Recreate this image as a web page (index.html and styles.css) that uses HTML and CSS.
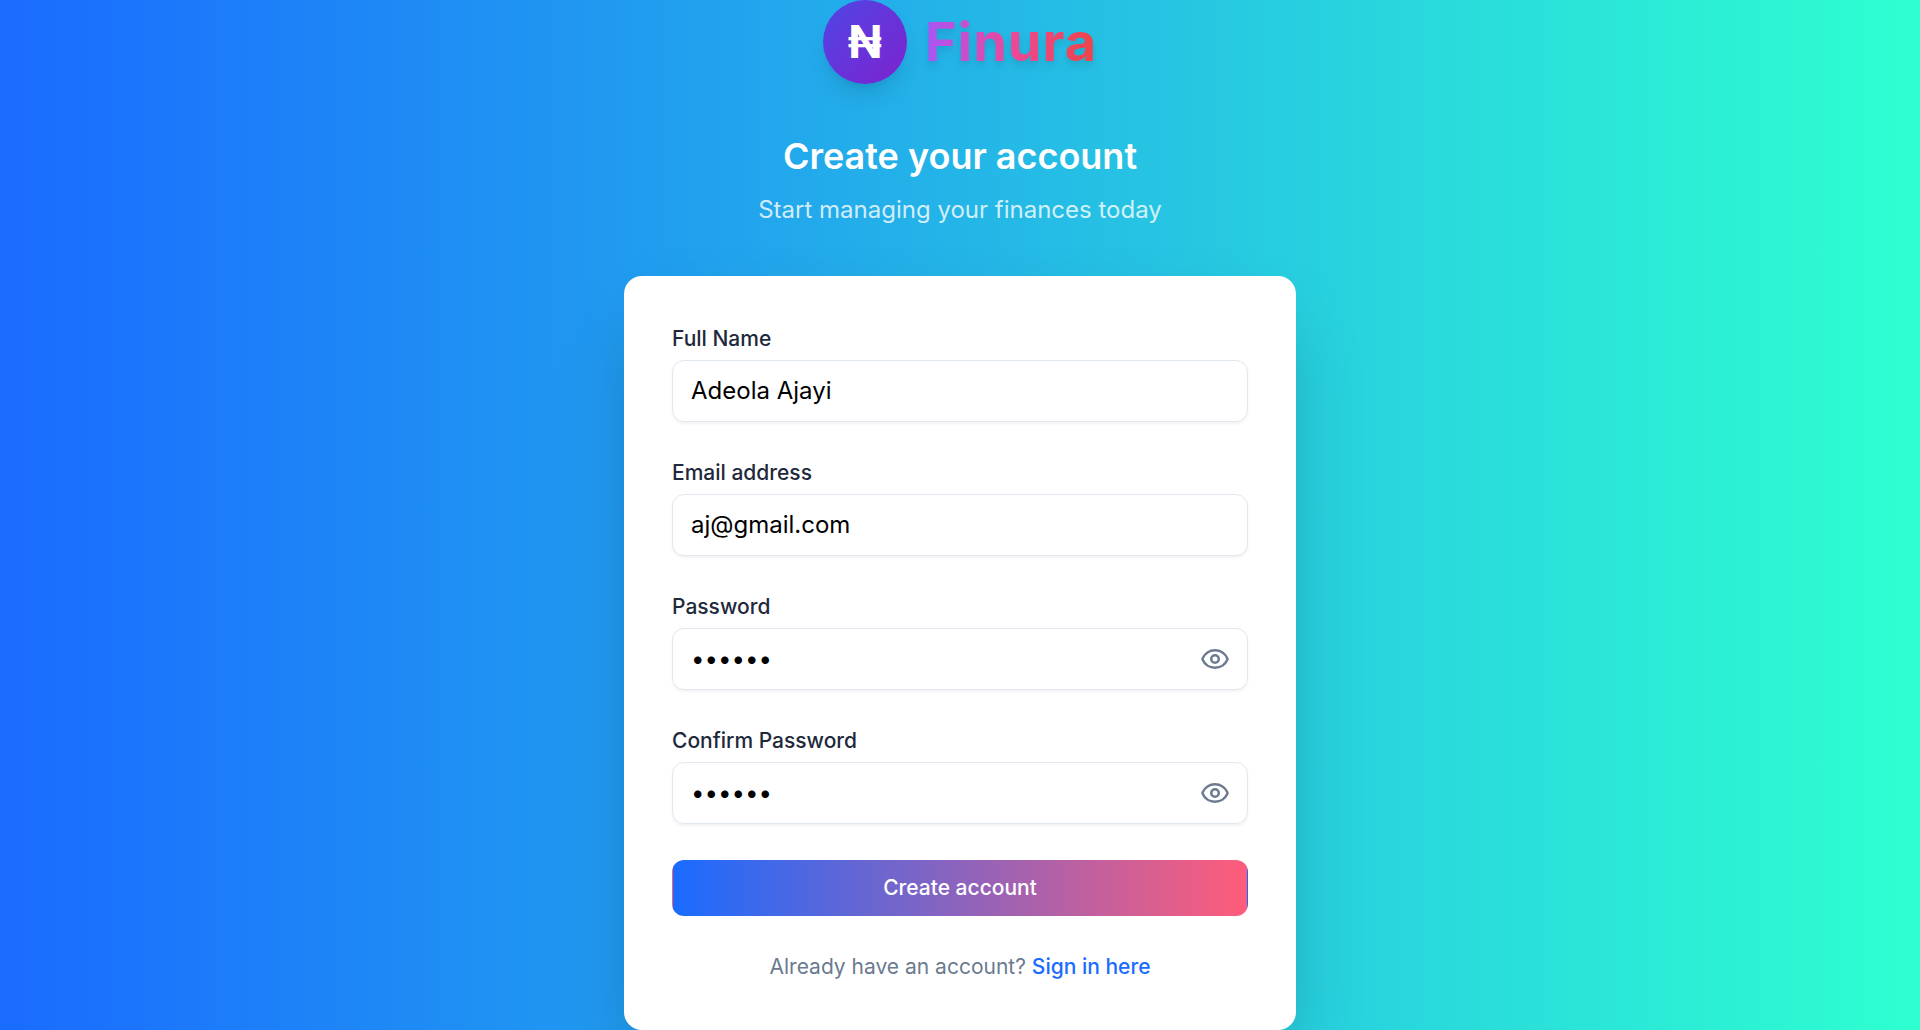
FILE: index.html
```html
<!DOCTYPE html>
<html lang="en">
<head>
<meta charset="utf-8">
<meta name="viewport" content="width=device-width, initial-scale=1">
<title>Finura – Create your account</title>
<link rel="stylesheet" href="styles.css">
</head>
<body>
<main class="page">
  <header class="intro">
    <div class="brand">
      <span class="brand-mark">₦</span>
      <span class="brand-name">Finura</span>
    </div>
    <h1 class="title">Create your account</h1>
    <p class="subtitle">Start managing your finances today</p>
  </header>
  <form class="card">
    <div class="field">
      <label class="label" for="name">Full Name</label>
      <input class="input" id="name" type="text" value="Adeola Ajayi">
    </div>
    <div class="field">
      <label class="label" for="email">Email address</label>
      <input class="input" id="email" type="email" value="aj@gmail.com">
    </div>
    <div class="field">
      <label class="label" for="password">Password</label>
      <div class="secret">
        <input class="input" id="password" type="password" value="secret">
        <button class="reveal" type="button" aria-label="Show password">
          <svg class="icon" viewBox="0 0 24 24" fill="none" stroke="currentColor" stroke-width="2" stroke-linecap="round" stroke-linejoin="round"><path d="M2.062 12.348a1 1 0 0 1 0-.696 10.75 10.75 0 0 1 19.876 0 1 1 0 0 1 0 .696 10.75 10.75 0 0 1-19.876 0"/><circle cx="12" cy="12" r="3"/></svg>
        </button>
      </div>
    </div>
    <div class="field">
      <label class="label" for="confirm">Confirm Password</label>
      <div class="secret">
        <input class="input" id="confirm" type="password" value="secret">
        <button class="reveal" type="button" aria-label="Show password confirmation">
          <svg class="icon" viewBox="0 0 24 24" fill="none" stroke="currentColor" stroke-width="2" stroke-linecap="round" stroke-linejoin="round"><path d="M2.062 12.348a1 1 0 0 1 0-.696 10.75 10.75 0 0 1 19.876 0 1 1 0 0 1 0 .696 10.75 10.75 0 0 1-19.876 0"/><circle cx="12" cy="12" r="3"/></svg>
        </button>
      </div>
    </div>
    <button class="submit" type="submit">Create account</button>
    <p class="switch">Already have an account? <a class="link" href="#">Sign in here</a></p>
  </form>
</main>
</body>
</html>
```
FILE: styles.css
```css
*,
*::before,
*::after {
  box-sizing: border-box;
}

body {
  margin: 0;
  font-family: Inter, "Liberation Sans", sans-serif;
}

.page {
  min-height: 100vh;
  display: flex;
  flex-direction: column;
  align-items: center;
  justify-content: center;
  gap: 48px;
  background: linear-gradient(to right, #1a6bff, #2effd0);
}

.intro {
  text-align: center;
}

.brand {
  display: flex;
  align-items: center;
  justify-content: center;
  gap: 18px;
  margin-bottom: 48px;
}

.brand-mark {
  display: flex;
  align-items: center;
  justify-content: center;
  width: 84px;
  height: 84px;
  border-radius: 50%;
  background: linear-gradient(to bottom right, #4f46e5, #7e22ce);
  box-shadow: 0 15px 22px -4px rgba(0, 0, 0, 0.1), 0 6px 9px -6px rgba(0, 0, 0, 0.1);
  color: #fff;
  font-size: 45px;
  line-height: 54px;
  font-weight: 700;
}

.brand-name {
  background: linear-gradient(to right, #a855f7, #ec4899, #ef4444);
  background-clip: text;
  color: transparent;
  filter: drop-shadow(0 6px 4px rgba(0, 0, 0, 0.07)) drop-shadow(0 3px 3px rgba(0, 0, 0, 0.06));
  font-size: 54px;
  line-height: 60px;
  font-weight: 700;
  letter-spacing: 1px;
}

.title {
  margin: 0 0 12px;
  color: #fff;
  font-size: 36px;
  line-height: 48px;
  font-weight: 600;
}

.subtitle {
  margin: 0;
  color: rgba(255, 255, 255, 0.8);
  font-size: 24px;
  line-height: 36px;
}

.card {
  display: flex;
  flex-direction: column;
  gap: 36px;
  width: 100%;
  max-width: 672px;
  padding: 48px;
  border-radius: 18px;
  background: #fff;
  box-shadow: 0 38px 75px -18px rgba(0, 0, 0, 0.25);
}

.field {
  display: flex;
  flex-direction: column;
  gap: 6px;
}

.label {
  color: #1e293b;
  font-size: 21px;
  line-height: 30px;
  font-weight: 500;
}

.input {
  width: 100%;
  height: 62px;
  padding: 11px 18px 13px;
  border: 1px solid #e2e8f0;
  border-radius: 12px;
  background: #fff;
  box-shadow: 0 2px 3px rgba(0, 0, 0, 0.05);
  color: #000;
  font-family: inherit;
  font-size: 24px;
  line-height: 36px;
}

.secret {
  position: relative;
}

.secret .input {
  display: block;
  padding-right: 66px;
}

.reveal {
  position: absolute;
  top: 0;
  right: 0;
  bottom: 0;
  display: flex;
  align-items: center;
  padding: 0 18px;
  border: 0;
  background: none;
  color: #6b7a90;
}

.icon {
  width: 30px;
  height: 30px;
}

.submit {
  height: 56px;
  border: 1px solid transparent;
  border-radius: 12px;
  background: linear-gradient(to right, #1a6bff, #ff5c7a);
  color: #fff;
  font-family: inherit;
  font-size: 21px;
  line-height: 30px;
  font-weight: 500;
}

.switch {
  margin: 0;
  color: #6b7a90;
  font-size: 21px;
  line-height: 30px;
  text-align: center;
}

.link {
  color: #1a6bff;
  font-weight: 500;
  text-decoration: none;
}
```
